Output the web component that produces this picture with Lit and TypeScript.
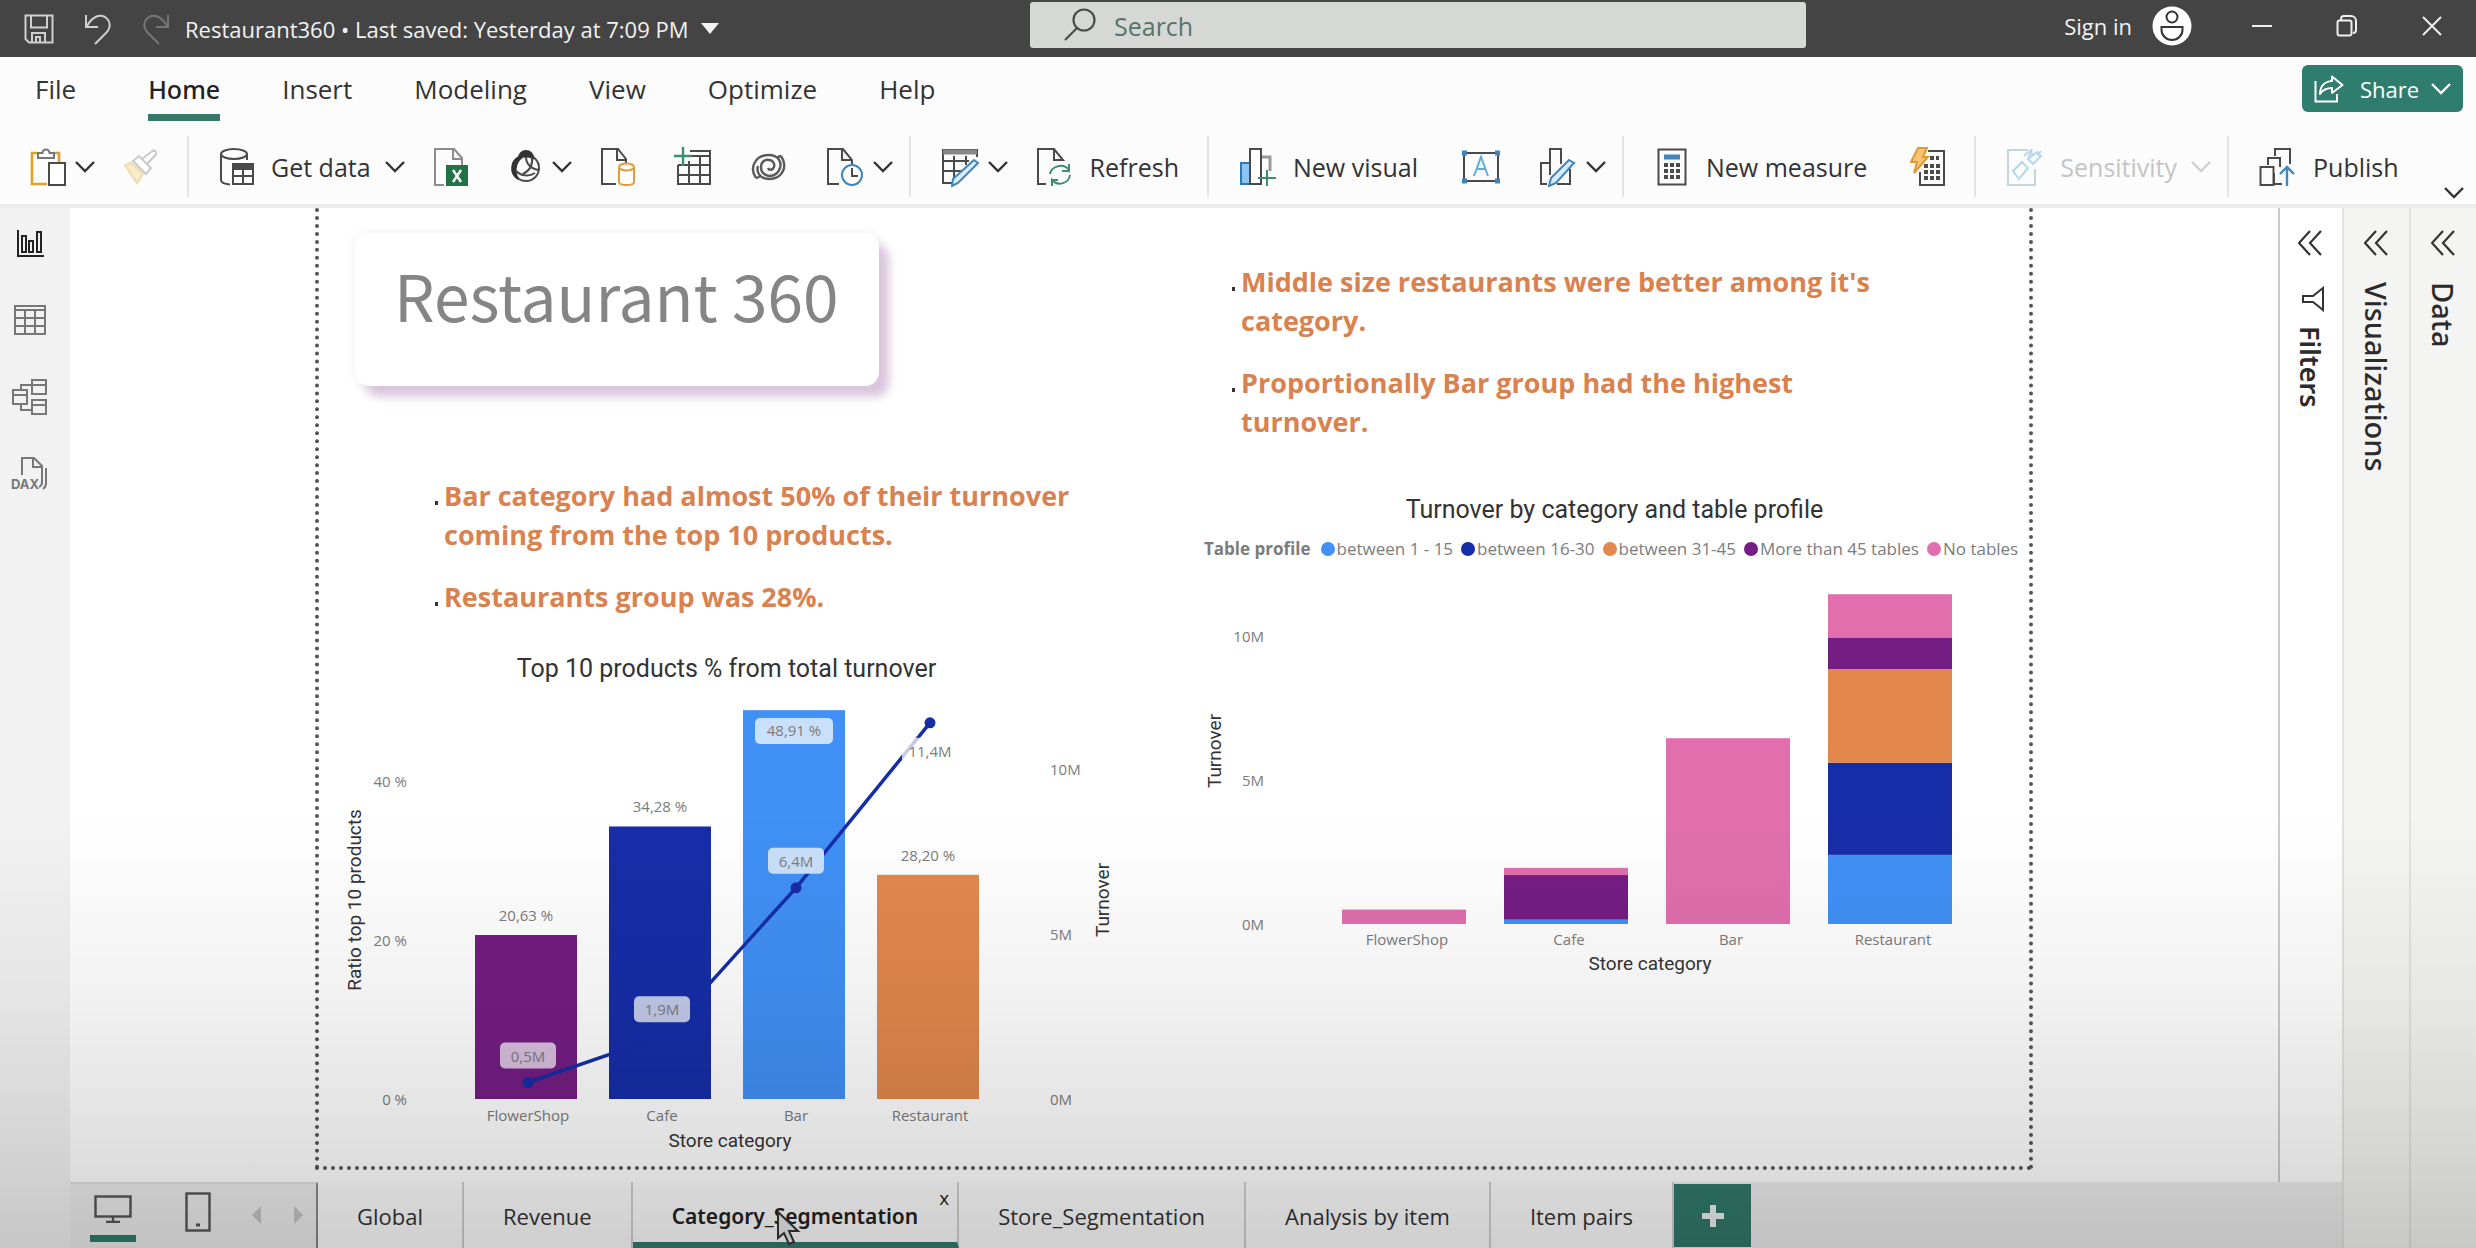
import { LitElement, html, svg, css, nothing, type TemplateResult, type SVGTemplateResult } from "lit";
import { customElement, property, state } from "lit/decorators.js";
import { classMap } from "lit/directives/class-map.js";

const BLUE = "#4090f5";
const NAVY = "#162da8";
const ORANGE = "#e2884c";
const PURPLE = "#741d82";
const PINK = "#e16fae";

/* ---------- icons ---------- */

const icon = (w: number, h: number, body: SVGTemplateResult, stroke = "#4a4a4a", sw = 2) => html`
  <svg width=${w} height=${h} viewBox="0 0 ${w} ${h}" fill="none" stroke=${stroke}
    stroke-width=${sw} aria-hidden="true">${body}</svg>`;

const chevron = (color = "#333") =>
  icon(20, 14, svg`<path d="M1 2l9 9 9-9" stroke-width="2.4" />`, color);

const icons: Record<string, () => TemplateResult> = {
  save: () => icon(30, 30, svg`<path d="M1.500 1.500h27v27H5l-3.500-3.500zM7 1.500v12h16v-12M8 28v-9h13v9M12 28v-5h4v5" />`, "#cfcfcf"),
  undo: () => icon(28, 32, svg`<path d="M2 2v12h12M3 13C8 4 15 1 21 4c6 4 6 11 1 16L11 31" />`, "#cfcfcf"),
  redo: () => icon(28, 32, svg`<path d="M26 2v12H14M25 13C20 4 13 1 7 4c-6 4-6 11-1 16l11 11" />`, "#767676"),
  search: () => icon(32, 34, svg`<circle cx="20" cy="12" r="10.500" /><path d="M13 20L1 32" />`, "#4b4b4b", 2.2),
  user: () => icon(40, 40, svg`<circle cx="20" cy="20" r="19.500" fill="#fff" stroke="none" />
    <circle cx="20" cy="11" r="5.500" stroke="#333" /><path d="M9.500 21h21v3a10.500 10 0 0 1-21 0z" stroke="#333" />`),
  minimize: () => icon(20, 20, svg`<path d="M0 10h20" />`, "#eee"),
  restore: () => icon(22, 22, svg`<rect x="1.500" y="5.500" width="14" height="15" rx="2" /><path d="M5 5V4a3 3 0 0 1 3-3h7a5 5 0 0 1 5 5v9a3 3 0 0 1-3 3" />`, "#eee"),
  close: () => icon(20, 20, svg`<path d="M1 1l18 18M19 1L1 19" />`, "#eee"),
  share: () => icon(30, 28, svg`<path d="M1.500 6v20.500H23V19" /><path d="M18 1.500l10.500 8.500L18 18v-5c-6 0-9 1.500-12 6 0-8 5-12.500 12-13z" stroke-linejoin="round" />`, "#fff"),
  paste: () => icon(36, 40, svg`<path d="M8 6H2v31h15M24 6h5v9" stroke="#e0a030" stroke-width="2.6" />
    <path d="M8 11V6h4.500a3.500 3.500 0 0 1 7 0H24v5z" fill="#fff" stroke="#777" /><rect x="19" y="16" width="16" height="22" fill="#fff" />`),
  brush: () => icon(36, 36, svg`<path d="M2 16l6-2 12 11-6 9z" fill="#f8eccb" stroke="#ecdcae" /><path d="M10 12l6-5 12 12-5 6zM19 10L30 1.500q4 0 3 4L24 15" stroke="#c9c9c9" fill="#fff" />`),
  data: () => icon(36, 40, svg`<ellipse cx="15" cy="7" rx="13" ry="5" /><path d="M2 7v26c0 2.500 4 4 9 4.500M28 7v6" />
    <rect x="14" y="17" width="20" height="20" fill="#fff" /><path d="M14 22h20M14 29h20M24 22v15" /><path d="M14 19h20" stroke-width="4" />`),
  excel: () => icon(36, 40, svg`<path d="M11 38H2V2h19l8 9v7M20 2v10h9" stroke="#8c8c8c" /><rect x="13" y="18" width="22" height="21" fill="#217346" stroke="none" /><path d="M20 23l8 12M28 23l-8 12" stroke="#fff" stroke-width="2.4" />`),
  lake: () => icon(36, 36, svg`<circle cx="19" cy="19" r="13" /><path d="M12 9a7 7 0 0 1 14 0c-4-2-9-2-14 0z" fill="#333" stroke="#333" />
    <path d="M13 8C4 11 2 24 11 30 7 23 8 14 14 9z" fill="#333" stroke="#333" />
    <path d="M19 8c0 7 5 12 13 13M25 8c1 8-3 14-9 17M9 22c5 5 13 6 19 2" />`),
  sql: () => icon(36, 40, svg`<path d="M16 37H2V2h16l8 10v4M17 2v11h9" />
    <path d="M19 21v14c0 4 15 4 15 0V21" stroke="#e39a3a" fill="#fff" /><ellipse cx="26.500" cy="20" rx="7.500" ry="3.500" stroke="#e39a3a" fill="#fff" />`),
  enter: () => icon(38, 40, svg`<path d="M4 18v19h32V4H16" /><path d="M16 9h20M4 18h32M4 28h32M15 14v23M26 10v27" /><path d="M9 0v19M0 9h18" stroke="#3a8f70" stroke-width="2.4" />`),
  verse: () => icon(38, 32, svg`<path d="M6 27C-1 17 5 4 19 4c9 0 13 7 11 13-2 6-7 8-11 8-5-1-8-4-8-9s4-8 8-7c4 0 6 4 5 7s-5 4-6 1" />
    <path d="M31 5c7 10 2 23-12 23-9 0-13-7-11-13M31 5c-2 0-3 1-4 2M6 27c2 0 3-1 4-2" />`, "#5a5a5a", 2.4),
  recent: () => icon(38, 40, svg`<path d="M13 37H2V2h15l9 11v4M16 2v11h10" /><circle cx="26" cy="28" r="10" stroke="#3e86bd" fill="#fff" /><path d="M26 21v8h6" />`),
  transform: () => icon(38, 40, svg`<path d="M2 37V3h34v7M2 14h26M2 24h19M2 36h10M13 9v22M25 9v9" /><path d="M2 5h34" stroke-width="5" stroke="#888" /><path d="M33 13l4 3-20 20-6 3 1-7z" fill="#d8ecfb" stroke="#3e86bd" />`),
  refresh: () => icon(38, 40, svg`<path d="M10 37H2V2h16l9 11h-9V2" /><path d="M14 27c1-7 13-12 19-4v-6M33 24h-7M34 28c-1 8-12 12-18 5v6M15 33h7" stroke="#3a8f70" />`),
  visual: () => icon(38, 40, svg`<rect x="2" y="16" width="9" height="21" fill="#8dc3f2" stroke="#2f78b4" /><path d="M22 10h9v14" stroke="#999" stroke-width="3" /><rect x="11" y="2" width="11" height="35" fill="#fff" /><path d="M28 23v16M19 31h18" stroke="#3a8f70" />`),
  textbox: () => icon(40, 34, svg`<rect x="3" y="3" width="34" height="28" /><path d="M13 26l7-19 7 19M16 19h8" stroke="#5aaede" />
    <path d="M1 3h5M34 3h5M1 31h5M34 31h5" stroke="#3e86bd" stroke-width="5" />`),
  shapes: () => icon(38, 40, svg`<path d="M8 37H2V16h9M11 28V2h11v15M31 22v15H18" /><path d="M30 13l5 3-18 20-7 3 2-8z" fill="#d8ecfb" stroke="#3e86bd" />`),
  measure: () => icon(30, 38, svg`<rect x="1.500" y="1.500" width="27" height="35" /><path d="M7 9h16" stroke="#3e86bd" stroke-width="5" /><path d="M7 17h16M7 23h16M7 29h16" stroke-width="4" stroke-dasharray="4 2" />`),
  quick: () => icon(36, 40, svg`<path d="M18 4h16v34H10V25" /><path d="M20 11h9M14 19h16M14 25h16M14 31h16" stroke-width="4" stroke-dasharray="4 2" /><path d="M8 1h9l-4 9h5L4 26l3-11H1z" fill="#f8c470" stroke="#e09a35" />`),
  sensitivity: () => icon(38, 40, svg`<path d="M22 3H2v35h27V22" stroke="#c5d5da" />
    <path d="M7 24l9-9 6 6-9 11zM18 9l6-5 3 4M22 12l5 5 8-8-4-4zM26 2l-4 10M35 4l-4 5" stroke="#b5d8e8" />`),
  publish: () => icon(38, 40, svg`<path d="M16 9V2h15v15M9 18V11h12v9M1.500 20h13v18h-13zM15 26v11h8" /><path d="M28 39V20M21 27l7-7 7 7" stroke="#3e86bd" stroke-width="2.4" />`),
  report: () => icon(28, 28, svg`<path d="M2 0v26h26" /><rect x="6" y="6" width="4" height="16" /><rect x="13" y="11" width="4" height="11" /><rect x="21" y="2" width="4" height="20" />`, "#222"),
  table: () => icon(32, 30, svg`<rect x="1" y="1" width="30" height="28" /><path d="M1 5h30M1 13h30M1 21h30M11 5v24M21 5v24" />`, "#777"),
  model: () => icon(36, 36, svg`<rect x="20" y="1" width="14" height="14" /><rect x="20" y="21" width="14" height="14" /><rect x="1" y="11" width="14" height="14" /><path d="M20 6h14M20 26h14M1 16h14M9 11V6h11M9 25v6h11" />`, "#777"),
  dax: () => html`<svg width="38" height="34" viewBox="0 0 38 34" fill="none" stroke="#777" stroke-width="2" aria-hidden="true">
    <path d="M11 18V1h12l8 8v16q0 4-3 5M22 1v9h9M35 11v15q0 4-3 6" />
    <text x="0" y="32" font-family="Inter, sans-serif" font-size="13" font-weight="700" fill="#777" stroke="none">DAX</text></svg>`,
  filter: () => icon(24, 26, svg`<path d="M22 2v22L12 16H2v-6h10z" />`, "#333"),
  collapse: () => icon(24, 26, svg`<path d="M12 1L1 13l11 12M23 1L12 13l11 12" />`, "#333", 2.2),
  desktop: () => icon(38, 28, svg`<rect x="1.500" y="1.500" width="35" height="20" /><path d="M19 22v5M12 27h14" />`, "#555", 2.4),
  phone: () => icon(26, 40, svg`<rect x="1.500" y="1.500" width="23" height="37" /><path d="M11 33h4" stroke-width="3" />`, "#555", 2.4),
  plus: () => icon(22, 22, svg`<path d="M11 0v22M0 11h22" stroke-width="6" />`, "#e8f0ee"),
  cursor: () => icon(26, 36, svg`<path d="M2 2v26l6-5 5 11 5-2-5-11h9z" fill="#e8e8e8" stroke="#333" />`),
};

/* ---------- charts ---------- */

const chartStyles = css`
  :host { display: block; }
  figure { margin: 0; }
  figcaption { font: 25px/24px Roboto, sans-serif; color: #333; text-align: center; }
  svg { display: block; width: 100%; height: auto; }
  .tick { font: 15px "Open Sans", sans-serif; fill: #7c7c7c; }
  .axis { font: 19px Roboto, sans-serif; fill: #333; }
  .mid { text-anchor: middle; }
  .end { text-anchor: end; }
`;

@customElement("combo-chart")
class ComboChart extends LitElement {
  static styles = [chartStyles, css`figcaption { padding-right: 40px; }`];

  private rows = [
    { name: "FlowerShop", ratio: 20.63, turnover: 0.5, color: PURPLE },
    { name: "Cafe", ratio: 34.28, turnover: 1.9, color: NAVY },
    { name: "Bar", ratio: 48.91, turnover: 6.4, color: BLUE },
    { name: "Restaurant", ratio: 28.2, turnover: 11.4, color: ORANGE },
  ];

  render() {
    const base = 423;
    const barX = (i: number) => 154 + i * 134;
    const cx = (i: number) => 207 + i * 134;
    const yRatio = (v: number) => base - v * 7.95;
    const yTurn = (v: number) => base - v * 33;
    const comma = (v: number, d: number) => v.toFixed(d).replace(".", ",");
    const points = this.rows.map((r, i) => `${cx(i)},${yTurn(r.turnover)}`).join(" ");
    return html`<figure>
      <figcaption>Top 10 products % from total turnover</figcaption>
      <svg viewBox="-2 5 855 475" role="img" aria-label="Top 10 products % from total turnover">
        ${[0, 20, 40].map((v) => svg`<text class="tick end" x="86" y=${yRatio(v) + 6}>${v} %</text>`)}
        ${[0, 5, 10].map((v) => svg`<text class="tick" x="729" y=${yTurn(v) + 6}>${v}M</text>`)}
        ${this.rows.map((r, i) => svg`
          <rect x=${barX(i)} y=${yRatio(r.ratio)} width="102" height=${r.ratio * 7.95} fill=${r.color} />
          <text class="tick mid" x=${cx(i)} y=${base + 22}>${r.name}</text>`)}
        <polyline points=${points} fill="none" stroke=${NAVY} stroke-width="3.500" />
        ${this.rows.map((r, i) => svg`<circle cx=${cx(i)} cy=${yTurn(r.turnover)} r="5.500" fill=${NAVY} />`)}
        ${this.rows.map((r, i) => {
          const inside = r.ratio > 45;
          const y = inside ? 60 : yRatio(r.ratio) - 14;
          return svg`
            ${inside ? svg`<rect x=${cx(i) - 41} y="42" width="78" height="26" rx="5" fill="#c9e0fa" />` : nothing}
            <text class="tick mid" x=${cx(i) - 2} y=${y}>${comma(r.ratio, 2)} %</text>`;
        })}
        ${this.rows.map((r, i) => {
          const last = i === 3;
          const y = yTurn(r.turnover) + (last ? 28 : -27);
          return svg`
            <rect x=${cx(i) - 28} y=${y - 13} width="56" height="26" rx="5" fill=${last ? "#ffffff" : ["#d9bfdf", "#c2caea", "#c9e0fa"][i]}
              opacity=${last ? 0.75 : 1} />
            <text class="tick mid" x=${cx(i)} y=${y + 6}>${comma(r.turnover, 1)}M</text>`;
        })}
        <text class="axis mid" x="409" y="471">Store category</text>
        <text class="axis mid" transform="translate(40 224) rotate(-90)">Ratio top 10 products</text>
        <text class="axis mid" transform="translate(788 224) rotate(-90)">Turnover</text>
      </svg>
    </figure>`;
  }
}

@customElement("stacked-chart")
class StackedChart extends LitElement {
  static styles = [chartStyles, css`
    ul { display: flex; align-items: center; gap: 8px; margin: 13px 0 0; padding: 0 0 0 30px; list-style: none;
      font: 17px/28px "Open Sans", sans-serif; color: #7c7c7c; white-space: nowrap; }
    li { display: flex; align-items: center; gap: 2px; }
    .name { font-weight: 700; margin-right: 2px; }
    .dot { width: 14px; height: 14px; border-radius: 50%; }
    figcaption { padding-left: 26px; }
  `];

  private keys = [
    { name: "between 1 - 15", color: BLUE },
    { name: "between 16-30", color: NAVY },
    { name: "between 31-45", color: ORANGE },
    { name: "More than 45 tables", color: PURPLE },
    { name: "No tables", color: PINK },
  ];

  private rows = [
    { name: "FlowerShop", values: [0, 0, 0, 0, 0.5] },
    { name: "Cafe", values: [0.15, 0, 0, 1.55, 0.25] },
    { name: "Bar", values: [0, 0, 0, 0, 6.45] },
    { name: "Restaurant", values: [2.4, 3.2, 3.25, 1.1, 1.5] },
  ];

  render() {
    const base = 361;
    const k = 28.8;
    const cx = (i: number) => 230 + i * 162;
    return html`<figure>
      <figcaption>Turnover by category and table profile</figcaption>
      <ul>
        <li class="name">Table profile</li>
        ${this.keys.map((s) => html`<li><span class="dot" style="background:${s.color}"></span>${s.name}</li>`)}
      </ul>
      <svg viewBox="0 0 855 420" role="img" aria-label="Turnover by category and table profile">
        ${[0, 5, 10].map((v) => svg`<text class="tick end" x="90" y=${base - v * k + 6}>${v}M</text>`)}
        ${this.rows.map((r, i) => {
          let top = base;
          return svg`${r.values.map((v, s) => {
            top -= v * k;
            return svg`<rect x=${cx(i) - 62} y=${top} width="124" height=${v * k} fill=${this.keys[s].color} />`;
          })}<text class="tick mid" x=${cx(i) + 3} y=${base + 21}>${r.name}</text>`;
        })}
        <text class="axis mid" x="476" y="407">Store category</text>
        <text class="axis mid" transform="translate(47 188) rotate(-90)">Turnover</text>
      </svg>
    </figure>`;
  }
}

/* ---------- application shell ---------- */

interface Tool { icon: string; label: string; text?: boolean; menu?: boolean; off?: boolean }

const toolGroups: Tool[][] = [
  [{ icon: "paste", label: "Paste", menu: true }, { icon: "brush", label: "Format painter", off: true }],
  [
    { icon: "data", label: "Get data", text: true, menu: true },
    { icon: "excel", label: "Excel workbook" },
    { icon: "lake", label: "OneLake data hub", menu: true },
    { icon: "sql", label: "SQL Server" },
    { icon: "enter", label: "Enter data" },
    { icon: "verse", label: "Dataverse" },
    { icon: "recent", label: "Recent sources", menu: true },
  ],
  [{ icon: "transform", label: "Transform data", menu: true }, { icon: "refresh", label: "Refresh", text: true }],
  [
    { icon: "visual", label: "New visual", text: true },
    { icon: "textbox", label: "Text box" },
    { icon: "shapes", label: "More visuals", menu: true },
  ],
  [{ icon: "measure", label: "New measure", text: true }, { icon: "quick", label: "Quick measure" }],
  [{ icon: "sensitivity", label: "Sensitivity", text: true, menu: true, off: true }],
  [{ icon: "publish", label: "Publish", text: true }],
];

@customElement("app-root")
class AppRoot extends LitElement {
  static styles = css`
    :host { display: flex; flex-direction: column; position: relative; height: 100vh; overflow: hidden; background: #fff;
      color: #333; font: 22px/30px "Open Sans", "Noto Sans", sans-serif; }
    * { box-sizing: border-box; }
    button { display: flex; align-items: center; margin: 0; padding: 0; border: 0; background: none; color: inherit;
      font: inherit; white-space: nowrap; cursor: pointer; }
    svg { display: block; flex: none; }
    ul { list-style: none; margin: 0; padding: 0; }

    .titlebar { display: grid; grid-template-columns: 1030fr 776fr 670fr; height: 57px; flex: none; background: #444; color: #f2f2f2; }
    .file { display: flex; align-items: center; gap: 30px; padding-left: 24px; }
    .filename { gap: 12px; margin-left: -15px; }
    .caret { border: 9px solid transparent; border-top: 11px solid #f2f2f2; border-bottom: 0; }
    .search { display: flex; align-items: center; gap: 18px; height: 46px; margin-top: 2px; padding-left: 34px;
      background: #d6d8d5; border-radius: 3px; }
    .search input { flex: 1; min-width: 0; padding: 2px 0 0; border: 0; outline: 0; background: none; color: #333; font: inherit; font-size: 25px; }
    .search input::placeholder { color: #55756b; opacity: 1; }
    .window { display: flex; align-items: center; justify-content: flex-end; gap: 64px; padding: 0 34px 6px 0; }
    .signin { gap: 20px; margin-right: -4px; }

    .menu { display: flex; align-items: center; height: 73px; flex: none; padding: 0 13px 0 35px; background: #fcfcfc; font-size: 26px; }
    .menu nav { display: flex; gap: 62px; flex: 1; }
    .menu nav button { height: 55px; padding-bottom: 2px; border-bottom: 7px solid transparent; }
    .menu nav button:first-child { margin-right: 10px; }
    .menu nav .on { border-bottom-color: #36786a; font-family: "Noto Sans", sans-serif; font-weight: 500; font-size: 25px; color: #222; }
    .share { gap: 12px; height: 47px; padding: 0 12px; margin-bottom: 10px; border-radius: 6px; background: #2f7d6e; color: #fff; font-size: 22px; }
    .share span { margin-left: 4px; }

    .tools { display: flex; height: 78px; flex: none; padding-left: 30px; background: #fcfcfc; border-bottom: 4px solid #ececec; font-size: 25px; }
    .group { display: flex; align-items: center; gap: 28px; height: 61px; margin-top: 6px; padding-right: 28px; }
    .group + .group { padding-left: 30px; border-left: 2px solid #e4e4e4; }
    .group.tight { padding-right: 16px; }
    .tool { gap: 9px; }
    .tool .label { margin: 0 5px 0 7px; }
    .tool:last-child:not(.menu-tool) .label { margin-right: 0; }
    .tool:not(.menu-tool):not(:last-child) { margin-right: 10px; }
    .tool .glyph { display: flex; justify-content: center; min-width: 36px; }
    .tool:disabled { color: #c4c4c4; }
    .more { align-self: flex-end; margin: 0 12px 4px auto; }

    .body { display: flex; flex: 1; min-height: 0; }
    .rail { display: flex; flex-direction: column; align-items: center; width: 70px; padding: 8px 10px 0 0; background: #f2f2f2; }
    .rail button { height: 77px; justify-content: center; width: 60px; padding-bottom: 2px; }
    .rail button:first-child { height: 58px; margin-bottom: 8px; }
    .center { display: flex; flex-direction: column; flex: 1; min-width: 0; }
    .work { display: flex; flex: 1; min-height: 0; }
    .canvas { flex: 1; min-width: 0; padding: 0 245px 12px; }
    .report { display: grid; grid-template-columns: 1fr 1fr; height: 100%; border: 4px dotted #555; border-top: 0; }
    .column { display: flex; flex-direction: column; min-width: 0; }
    .card { align-self: flex-start; margin: 25px 0 0 36px; padding: 21px 40px 0 39px; height: 153px; border-radius: 14px; background: #fff;
      box-shadow: 10px 11px 10px #dac6dd, 0 0 12px #eee; color: #858585; }
    h1 { margin: 0; font: 64px/80px "Noto Sans CJK SC", "Open Sans", sans-serif; white-space: nowrap; }
    .notes { display: flex; flex-direction: column; gap: 23px; max-width: 660px; color: #d9824f; font: 700 27px/39px "Open Sans", sans-serif; }
    .notes li { display: flex; gap: 6px; }
    .notes li::before { content: ""; flex: none; width: 3px; height: 4px; margin-top: 25px; background: #333; }
    .left .notes { margin: 90px 0 0 116px; }
    .left combo-chart { margin-top: 41px; }
    .right .notes { margin: 54px 0 0 58px; }
    .right stacked-chart { margin-top: 57px; }

    .pane { display: flex; flex-direction: column; align-items: center; width: 67px; padding: 22px 2px 0 0; background: #f4f4f3; border-left: 2px solid #e2e2e2; font-size: 29px; color: #2b2b2b; }
    .pane.filters { width: 64px; background: #fff; border-left-color: #ccc; }
    .pane .name { writing-mode: vertical-rl; margin-top: 26px; font-family: "Noto Sans", sans-serif; font-weight: 500; }
    .filters .name { margin-top: 14px; font-weight: 600; font-size: 27px; }
    .filters .funnel { margin: 30px 0 0 6px; }

    .pages { display: flex; height: 66px; flex: none; background: #ececec; }
    .views { display: flex; align-items: flex-start; width: 248px; padding: 8px 0 0 20px; border-top: 2px solid #e0e0e0; border-right: 2px solid #888; }
    .view { flex: none; justify-content: center; height: 40px; }
    .view.on { width: 46px; height: 50px; padding-bottom: 10px; border-bottom: 7px solid #2f7d6e; }
    .view + .view { margin-left: 49px; }
    .step { width: 0; height: 18px; margin-top: 14px; border: 9px solid transparent; }
    .prev { margin-left: 41px; border-right-color: #c4c4c4; border-left: 0; }
    .next { margin-left: 33px; border-left-color: #c4c4c4; border-right: 0; }
    .tab { position: relative; padding: 2px 39px 0; height: 66px; background: #fcfcfc; border-right: 2px solid #cfcfcf; }
    .tab.on { border-bottom: 6px solid #2f7d6e; padding: 8px 39px 0; font-family: "Noto Sans", sans-serif; font-weight: 600; font-size: 21px; color: #222; }
    .shut { position: absolute; top: 4px; right: 8px; font: 19px/24px "Open Sans", sans-serif; }
    .pointer { position: absolute; left: 143px; top: 28px; }
    .add { width: 77px; height: 63px; margin-top: 2px; justify-content: center; background: #32786b; }

    .shade { position: absolute; inset: 65% 0 0; pointer-events: none;
      background: linear-gradient(rgba(0, 0, 0, 0), rgba(0, 0, 0, 0.05) 41%, rgba(0, 0, 0, 0.125) 78%, rgba(0, 0, 0, 0.18)); }
  `;

  @property() fileName = "Restaurant360 • Last saved: Yesterday at 7:09 PM";
  @state() private menu = "Home";
  @state() private tab = "Category_Segmentation";

  private tool(t: Tool) {
    return html`<button class=${classMap({ tool: true, "menu-tool": !!t.menu })} ?disabled=${t.off} aria-label=${t.label}>
      <span class="glyph">${icons[t.icon]()}</span>
      ${t.text ? html`<span class="label">${t.label}</span>` : nothing}
      ${t.menu ? chevron(t.off ? "#d0d0d0" : "#333") : nothing}
    </button>`;
  }

  private notes(items: string[]) {
    return html`<ul class="notes">${items.map((n) => html`<li><span>${n}</span></li>`)}</ul>`;
  }

  render() {
    return html`
      <header class="titlebar">
        <div class="file">
          <button aria-label="Save">${icons.save()}</button>
          <button aria-label="Undo">${icons.undo()}</button>
          <button aria-label="Redo">${icons.redo()}</button>
          <button class="filename">${this.fileName}<span class="caret"></span></button>
        </div>
        <label class="search">${icons.search()}<input type="search" placeholder="Search" aria-label="Search" /></label>
        <div class="window">
          <button class="signin">Sign in ${icons.user()}</button>
          <button aria-label="Minimize">${icons.minimize()}</button>
          <button aria-label="Restore">${icons.restore()}</button>
          <button aria-label="Close">${icons.close()}</button>
        </div>
      </header>

      <div class="menu">
        <nav>
          ${["File", "Home", "Insert", "Modeling", "View", "Optimize", "Help"].map((m) => html`
            <button class=${classMap({ on: m === this.menu })} @click=${() => (this.menu = m)}>${m}</button>`)}
        </nav>
        <button class="share">${icons.share()}<span>Share</span>${chevron("#fff")}</button>
      </div>

      <div class="tools">
        ${toolGroups.map((g) => html`<div class=${classMap({ group: true, tight: !!g[g.length - 1].menu })}>${g.map((t) => this.tool(t))}</div>`)}
        <button class="more" aria-label="Collapse ribbon">${chevron()}</button>
      </div>

      <div class="body">
        <nav class="rail">
          <button aria-label="Report view">${icons.report()}</button>
          <button aria-label="Table view">${icons.table()}</button>
          <button aria-label="Model view">${icons.model()}</button>
          <button aria-label="DAX query view">${icons.dax()}</button>
        </nav>
        <div class="center">
          <div class="work">
            <main class="canvas">
              <div class="report">
                <section class="column left">
                  <div class="card"><h1>Restaurant 360</h1></div>
                  ${this.notes([
                    "Bar category had almost 50% of their turnover coming from the top 10 products.",
                    "Restaurants group was 28%.",
                  ])}
                  <combo-chart></combo-chart>
                </section>
                <section class="column right">
                  ${this.notes([
                    "Middle size restaurants were better among it's category.",
                    "Proportionally Bar group had the highest turnover.",
                  ])}
                  <stacked-chart></stacked-chart>
                </section>
              </div>
            </main>
            <aside class="pane filters">
              <button aria-label="Expand filters">${icons.collapse()}</button>
              <span class="funnel">${icons.filter()}</span>
              <span class="name">Filters</span>
            </aside>
          </div>
          <footer class="pages">
            <div class="views">
              <button class="view on" aria-label="Desktop layout">${icons.desktop()}</button>
              <button class="view" aria-label="Mobile layout">${icons.phone()}</button>
              <button class="step prev" aria-label="Previous page"></button>
              <button class="step next" aria-label="Next page"></button>
            </div>
            ${["Global", "Revenue", "Category_Segmentation", "Store_Segmentation", "Analysis by item", "Item pairs"].map((p) => {
              const on = p === this.tab;
              return html`<button class=${classMap({ tab: true, on })} @click=${() => (this.tab = p)}>${p}
                ${on ? html`<span class="shut">x</span><span class="pointer">${icons.cursor()}</span>` : nothing}
              </button>`;
            })}
            <button class="add" aria-label="New page">${icons.plus()}</button>
          </footer>
        </div>
        <aside class="pane"><button aria-label="Expand visualizations">${icons.collapse()}</button><span class="name">Visualizations</span></aside>
        <aside class="pane"><button aria-label="Expand data">${icons.collapse()}</button><span class="name">Data</span></aside>
      </div>
      <div class="shade"></div>
    `;
  }
}
